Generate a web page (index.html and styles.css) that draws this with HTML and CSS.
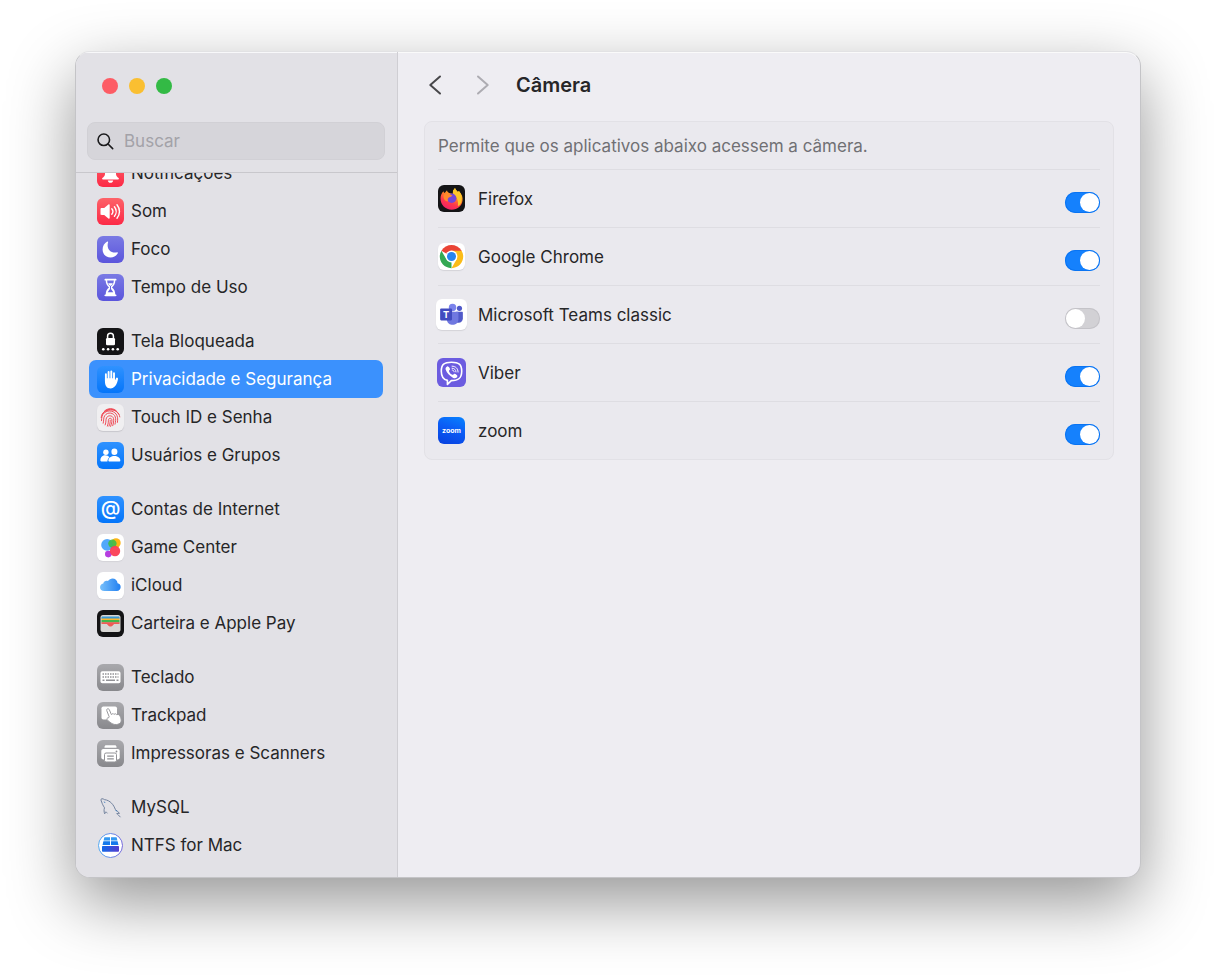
FILE: index.html
```
<!DOCTYPE html>
<html lang="pt-BR">
<head>
<meta charset="utf-8">
<meta name="viewport" content="width=device-width, initial-scale=1">
<title>Câmera</title>
<link rel="stylesheet" href="styles.css">
</head>
<body>
<div class="window">
  <aside class="sidebar">
    <div class="traffic">
      <button class="light close" type="button" aria-label="Fechar"></button>
      <button class="light minimize" type="button" aria-label="Minimizar"></button>
      <button class="light expand" type="button" aria-label="Ampliar"></button>
    </div>
    <label class="search">
      <svg class="search-icon" viewBox="0 0 18 18" aria-hidden="true"><circle cx="7.2" cy="7.2" r="6.1"/><path d="M11.7 11.7 16.6 16.6"/></svg>
      <input type="search" placeholder="Buscar" aria-label="Buscar">
    </label>
    <nav class="nav" aria-label="Ajustes">
      <div class="groups">
      <ul class="group">
        <li><a class="item" href="#notificacoes"><svg class="icon red" viewBox="0 0 27 27" aria-hidden="true"><path fill="#fff" d="M13.5 4.5c-3.600 0-5.500 2.500-5.500 6v3.500c0 2-1.200 2.800-2.600 4-.5.500-.4 1.500.6 1.500h15c1 0 1.100-1 .6-1.500-1.400-1.200-2.600-2-2.600-4v-3.500c0-3.500-1.900-6-5.500-6zM10.800 20.500h5.400c-.3 1.400-1.300 2.300-2.700 2.300s-2.400-.9-2.700-2.300z"/></svg><span>Notificações</span></a></li>
        <li><a class="item" href="#som"><svg class="icon red" viewBox="0 0 27 27" aria-hidden="true"><path fill="#fff" d="M3.500 11.300c0-.8.400-1.200 1.200-1.200h2.500l4.200-3.700c.6-.5 1.300-.2 1.300.6v13c0 .8-.7 1.100-1.300.6l-4.200-3.700H4.700c-.8 0-1.200-.4-1.200-1.200z"/><path class="line" d="M14.800 10.700c1.300 1.600 1.300 4 0 5.600M17.400 8.700c2.300 2.800 2.300 6.800 0 9.600M20 6.700c3.300 4 3.300 9.600 0 13.600"/></svg><span>Som</span></a></li>
        <li><a class="item" href="#foco"><svg class="icon indigo" viewBox="0 0 27 27" aria-hidden="true"><path fill="#fff" d="M10.300 5.600c.5-.3 1 .1.800.7-2 5.900 2.500 11.500 9 10 .6-.1 1 .3.700.9-1.500 2.700-4 4.200-7.200 4.200-4.700 0-8-3.300-8-8 0-3.300 1.700-6.300 4.700-7.800z"/></svg><span>Foco</span></a></li>
        <li><a class="item" href="#tempo"><svg class="icon indigo" viewBox="0 0 27 27" aria-hidden="true"><path fill="#fff" fill-rule="evenodd" d="M8.500 4.800h10c.7 0 1 .4 1 .9s-.3.900-1 .9h-.2c0 3.400-1.300 5.200-3.300 6.900 2 1.700 3.300 3.500 3.300 6.900h.2c.7 0 1 .4 1 .9s-.3.900-1 .9h-10c-.7 0-1-.4-1-.9s.3-.9 1-.9h.2c0-3.400 1.300-5.200 3.300-6.900-2-1.700-3.300-3.500-3.300-6.900h-.2c-.7 0-1-.4-1-.9s.3-.9 1-.9zm1.700 1.800c0 3 1.300 4.400 2.800 5.600v2.800l-2.300 3.300h5.600l-2.300-3.300v-2.800c1.500-1.200 2.800-2.600 2.800-5.600z"/><path fill="#fff" d="M11.200 9.200h4.600c-.5 1.500-1.500 2-2.300 2.900-.8-.9-1.800-1.400-2.300-2.900z"/></svg><span>Tempo de Uso</span></a></li>
      </ul>
      <ul class="group">
        <li><a class="item" href="#tela"><svg class="icon black" viewBox="0 0 27 27" aria-hidden="true"><rect x="9" y="10" width="9" height="7.200" rx="1.200" fill="#fff"/><path d="M10.600 10.500V8c0-3.700 5.800-3.700 5.800 0v2.500" fill="none" stroke="#fff" stroke-width="1.500"/><g fill="#fff"><circle cx="6.300" cy="21.300" r="1.300"/><circle cx="11.100" cy="21.300" r="1.300"/><circle cx="15.900" cy="21.300" r="1.300"/><circle cx="20.700" cy="21.300" r="1.300"/></g></svg><span>Tela Bloqueada</span></a></li>
        <li><a class="item selected" href="#privacidade" aria-current="page"><svg class="icon blue" viewBox="0 0 27 27" aria-hidden="true"><g fill="none" stroke="#fff" stroke-width="1.900" stroke-linecap="round"><path d="M8.900 8.300v7M11.600 6v8M14.300 5.500v8.500M17 7.300v8M20 12.500l-2.200 4.700"/></g><path fill="#fff" d="M7.950 12.300h10v2.500l1-1 1.900-1.700c.2 3-1.700 10.300-7 10.300-4.600 0-5.900-3.600-5.900-7z"/></svg><span>Privacidade e Segurança</span></a></li>
        <li><a class="item" href="#touchid"><svg class="icon light-gray" viewBox="0 0 27 27" aria-hidden="true"><g fill="none" stroke="#ef4350" stroke-width=".95" stroke-linecap="round"><path d="M7.500 7c3.500-3.200 8.700-3.200 12 0M5.200 10.200c3.600-6.700 13-6.700 16.600 0M4.200 13.600c.7-9.800 17.500-10.700 18.600-.7M4.500 16.700c.2-3.200.1-5.700 3-8 4-3.200 10.600-1.800 12.500 3 .8 2 .8 4.200.4 6.700M6.200 19.200c.8-3 0-5.400 1.600-7.600 2.800-4 9.100-3.100 10.500 1.400.7 2.200.3 4.700-.3 7.200M8.200 20.900c1.200-3.200.3-5.200 1.400-7.200 1.600-2.900 6-2.300 6.900.7.600 2.400-.1 4.800-.8 7.300M10.400 22.100c1.400-3.400.6-4.900 1.200-6.700.6-1.700 2.800-1.400 3.200.1.500 2.300-.5 4.500-1.200 6.900M13.200 16.200c.3 2-.4 3.800-1.200 5.900"/></g></svg><span>Touch ID e Senha</span></a></li>
        <li><a class="item" href="#usuarios"><svg class="icon blue" viewBox="0 0 27 27" aria-hidden="true"><g fill="#fff"><circle cx="8.900" cy="10.300" r="2.700"/><path d="M3.400 18.300c0-5.800 6.800-6.200 9.100-3-1.300 1-2 2.500-2.100 4.200H4.300c-.6 0-.9-.5-.9-1.200z"/><ellipse cx="17.400" cy="9.800" rx="3" ry="3.300"/><path d="M11.400 18.400c0-6 11.900-6 11.900 0 0 .7-.4 1.100-1 1.100h-9.900c-.6 0-1-.4-1-1.100z"/></g></svg><span>Usuários e Grupos</span></a></li>
      </ul>
      <ul class="group">
        <li><a class="item" href="#contas"><svg class="icon blue" viewBox="0 0 27 27" aria-hidden="true"><text class="at" x="13.500" y="19" text-anchor="middle">@</text></svg><span>Contas de Internet</span></a></li>
        <li><a class="item" href="#game"><svg class="icon white" viewBox="0 0 27 27" aria-hidden="true"><circle cx="19" cy="8.900" r="4.700" fill="#fdb515"/><circle cx="10.100" cy="10.900" r="5.900" fill="#52a8fb"/><circle cx="11.300" cy="20.100" r="3.300" fill="#b63fe0"/><circle cx="15.400" cy="9.600" r="4.200" fill="#3dbd48" opacity=".9"/><circle cx="18" cy="17" r="5.200" fill="#fb3d54" opacity=".95"/></svg><span>Game Center</span></a></li>
        <li><a class="item" href="#icloud"><svg class="icon white" viewBox="0 0 27 27" aria-hidden="true"><defs><linearGradient id="cloud" x1="0" x2="1"><stop stop-color="#78c0fb"/><stop offset="1" stop-color="#217ff1"/></linearGradient></defs><path fill="url(#cloud)" d="M7.300 19c-5.300 0-5.600-6.700-1-7.600.5-2.500 3-3.400 4.700-2.300 2.600-4.500 9.200-3.100 9.600 2.200 4.100.4 4.400 7.700-.9 7.700z"/></svg><span>iCloud</span></a></li>
        <li><a class="item" href="#carteira"><svg class="icon black" viewBox="0 0 27 27" aria-hidden="true"><rect x="3.500" y="5" width="20" height="17" rx="2.500" fill="#d8d7d5"/><path fill="#3a98d2" d="M4.500 7.500c0-.7.500-1 1-1h16c.5 0 1 .3 1 1V9h-18z"/><path fill="#fbb62c" d="M4.500 8.500h18V10h-18z"/><path fill="#42b64b" d="M4.500 10h18v2.500h-18z"/><path fill="#f05b55" d="M4.500 12.200h18V14h-4.900c-1.400 0-1.600 2.500-4.100 2.500S10.800 14 9.400 14H4.500z"/></svg><span>Carteira e Apple Pay</span></a></li>
      </ul>
      <ul class="group">
        <li><a class="item" href="#teclado"><svg class="icon gray" viewBox="0 0 27 27" aria-hidden="true"><rect x="3.500" y="7.300" width="20" height="12" rx="1.800" fill="#fff"/><path d="M5.500 10h16M5.500 13h16" stroke="#929296" stroke-width="1.500" stroke-dasharray="1.500 1"/><path d="M5.500 16.300h2M9 16.300h9M19.500 16.300h2" stroke="#929296" stroke-width="1.400"/></svg><span>Teclado</span></a></li>
        <li><a class="item" href="#trackpad"><svg class="icon gray" viewBox="0 0 27 27" aria-hidden="true"><rect x="4.500" y="4.500" width="15.500" height="13" rx="1.800" fill="#fff"/><path fill="#fff" stroke="#99999d" stroke-width="1" d="M12.200 14.800 9.800 8.700c-.7-1.900 1.700-2.800 2.500-1l2.100 4.900c.8-1.200 2.200-1.100 2.700-.2.900-1 2.200-.7 2.600.3 2.200-.9 3.100.5 3.900 2.600 1.700 4.700-.5 6.800-4 7.200-3.500.4-5.600-1.300-9.100-4.300-1.300-1.200-.4-2.500 1-2.300z"/></svg><span>Trackpad</span></a></li>
        <li><a class="item" href="#impressoras"><svg class="icon gray" viewBox="0 0 27 27" aria-hidden="true"><g fill="#fff"><path d="M7.500 7.800V7c0-1.100.7-1.700 1.700-1.700h8.600c1 0 1.700.6 1.700 1.700v.8z"/><path d="M4.300 11c0-1.300.8-2.100 2.100-2.100h14.200c1.300 0 2.100.8 2.100 2.100v6.300c0 1.300-.8 2.100-2.100 2.100H6.400c-1.300 0-2.100-.8-2.100-2.100z"/></g><circle cx="19.500" cy="11.500" r=".9" fill="#909094"/><rect x="7.500" y="13" width="12" height="9" rx="1.600" fill="#fff" stroke="#939397"/><path d="M10.200 16.100h6.600M10.200 18.900h6.600" stroke="#909094" stroke-width="1.200"/></svg><span>Impressoras e Scanners</span></a></li>
      </ul>
      <ul class="group">
        <li><a class="item" href="#mysql"><svg class="icon" viewBox="0 0 27 27" aria-hidden="true"><g fill="none" stroke="#71819d" stroke-width="1" stroke-linejoin="round"><path d="M8.700 17.900c-.4.600-.8 1.300-1 1.900-.7-1.800-.9-3.900-.2-6C6 11.500 5.200 9.700 4.700 8 3.900 6.700 3.600 5 4.800 4.700c1-.1 1.800.4 2.600.9 6 .7 9.400 5.500 11 10 1 .9 3 2.300 4.100 3.700-1.100 0-2 .1-2.800.3 1 .8 2.400 1.900 3.700 3.600M10.400 19.300c-.7-.8-1.200-1.500-1.700-1.400"/><path stroke="#417dbd" d="m7.200 7.600.8 1.300M18.700 16.100l1.400 1.500"/></g></svg><span>MySQL</span></a></li>
        <li><a class="item" href="#ntfs"><svg class="icon" viewBox="0 0 27 27" aria-hidden="true"><defs><linearGradient id="ring" x1="0" x2="1"><stop stop-color="#54a8f0"/><stop offset="1" stop-color="#7569db"/></linearGradient><linearGradient id="drive" x1="0" x2="1"><stop stop-color="#1168e8"/><stop offset="1" stop-color="#563dce"/></linearGradient></defs><circle cx="13.500" cy="13.500" r="12" fill="#fff" stroke="url(#ring)" stroke-width="1"/><path fill="#3498f1" d="M7.400 5.200H13V8.400H6.600zM14 5.200h5.600l.8 3.200H14z"/><path fill="#1579ec" d="M6.400 9.300H13v3.600H5.500zM14 9.300h6.600l.9 3.600H14z"/><rect x="5" y="14" width="17" height="5.800" rx=".8" fill="url(#drive)"/></svg><span>NTFS for Mac</span></a></li>
      </ul>
      </div>
    </nav>
  </aside>
  <main class="content">
    <header class="toolbar">
      <button class="arrow" type="button" aria-label="Voltar"><svg viewBox="0 0 14 20" aria-hidden="true"><path d="M12 1.500 2.300 10l9.700 8.500"/></svg></button>
      <button class="arrow forward" type="button" aria-label="Avançar" disabled><svg viewBox="0 0 14 20" aria-hidden="true"><path d="M2 1.500 11.700 10 2 18.500"/></svg></button>
      <h1 class="title">Câmera</h1>
    </header>
    <section class="panel">
      <p class="note">Permite que os aplicativos abaixo acessem a câmera.</p>
      <label class="app"><svg class="app-icon black" viewBox="0 0 27 27" aria-hidden="true"><defs><linearGradient id="fox" x1=".8" x2=".3" y2="1"><stop stop-color="#ffdd36"/><stop offset=".4" stop-color="#ff8b25"/><stop offset=".7" stop-color="#ff374d"/><stop offset="1" stop-color="#ee2068"/></linearGradient></defs><path fill="url(#fox)" d="M5.400 6.200c.3 1 .7 1.500 1.300 1.900L9 5.200c.2 1.500 1 2.300 2.300 2.700l3.400 1 .3-3.100 2-2.900c.5 2 2 2.800 3 4l.9-.9C24 9.300 25 12.300 24.500 15.700c-.8 5.500-5.200 9-10.700 9-6.500 0-11.300-4.900-11.300-11.200 0-2.900 1.100-5.500 2.900-7.300z"/><path fill="#ffc629" d="m15 5.800 2-2.900c.5 2 2 2.800 3 4l.9-.9c2.800 3 3.800 8.500 1.800 12.400-.7 1.400-1.700 2-2.800 2.600 1-4.800-1.300-10-4.900-12.100z"/><circle cx="13.700" cy="13.200" r="4.700" fill="#7446d8"/><path fill="#ff8a2b" d="M5.500 10.500c1.500-2.300 4.500-2.500 6.400-1.200l2.400 1.100c-1.200 1.900-2.800 1.400-3.800 2.400-1.200 1.200-.8 2.500-.3 3.600-3.300 0-4.900-2.600-4.700-5.900z"/></svg><span class="name">Firefox</span><input class="switch" type="checkbox" role="switch" checked></label>
      <label class="app"><svg class="app-icon white" viewBox="0 0 27 27" aria-hidden="true"><path fill="#ea4335" d="M13.500 13.500 3.400 7.700C8 0 19 0 23.600 7.700z"/><path fill="#34a853" d="M13.500 13.500v11.700C4 25.200-1 15.200 3.400 7.700l5 8.600z"/><path fill="#fbbc18" d="M13.500 25.200c9.500 0 14.500-10 10.100-17.500H13.500l5 8.700z"/><circle cx="13.500" cy="13.500" r="5.900" fill="#fff"/><circle cx="13.500" cy="13.500" r="4.500" fill="#2684ee"/></svg><span class="name">Google Chrome</span><input class="switch" type="checkbox" role="switch" checked></label>
      <label class="app"><svg class="app-icon large white" viewBox="0 0 30 30" aria-hidden="true"><circle cx="16" cy="8.200" r="3.600" fill="#7b83eb"/><circle cx="22.700" cy="9" r="2.500" fill="#5059c9"/><path fill="#5059c9" d="M19.500 12.300H25c.7 0 1 .4 1 1v5.300c0 3.500-3 5.200-6.500 3.800z"/><path fill="#7078e0" d="M10.500 12.300h10c.7 0 1.200.4 1.200 1.100v5.900c0 7.400-10.500 7.400-11.200 1z"/><rect x="4" y="9.200" width="11.500" height="11.500" rx="1" fill="#414bc0"/><text class="teams-letter" x="9.750" y="18.300" text-anchor="middle">T</text></svg><span class="name">Microsoft Teams classic</span><input class="switch" type="checkbox" role="switch"></label>
      <label class="app"><svg class="app-icon medium violet" viewBox="0 0 27 27" aria-hidden="true"><g fill="none" stroke="#fff" stroke-width="1.500" stroke-linecap="round" stroke-linejoin="round"><path d="M9.700 20.800c-4-.8-5.700-3.300-5.700-8.500C4 6 6.700 3.900 13.500 3.900S23 6 23 12.300c0 6.600-3 8.800-9.700 8.800l-3.600 3.500z"/><path stroke-width=".9" d="M14 7.600c3.500.1 5.500 2.100 5.600 5.500M14 9.500c2.200.1 3.600 1.300 3.700 3.500M14.200 11.200c1 .1 1.600.6 1.700 1.600"/></g><path fill="#fff" d="M9.700 7.700c.8-.5 2.700 2.100 2.400 2.900-.2.700-1.200.9-1 1.600.5 1.800 1.700 3 3.400 3.500.8.200 1-.9 1.700-1 .8-.2 3.100 1.500 2.800 2.300-.8 2-2.400 2.300-4.200 1.300-3.200-1.700-5.400-4.100-6.700-7.300-.5-1.300.2-2.600 1.600-3.300z"/></svg><span class="name">Viber</span><input class="switch" type="checkbox" role="switch" checked></label>
      <label class="app"><svg class="app-icon zoom" viewBox="0 0 27 27" aria-hidden="true"><text class="zoom-word" x="13.500" y="15.500" text-anchor="middle">zoom</text></svg><span class="name">zoom</span><input class="switch" type="checkbox" role="switch" checked></label>
    </section>
  </main>
</div>
</body>
</html>
```
FILE: styles.css
```
* {
  box-sizing: border-box;
}

body {
  margin: 0;
  min-height: 100vh;
  display: flex;
  padding: 51px 75px 98px;
  background: #fff;
  color: #262628;
  font-family: Inter, "Liberation Sans", sans-serif;
  font-size: 17px;
  line-height: 24px;
}

button {
  padding: 0;
  border: 0;
  background: none;
}

.window {
  flex: 1;
  display: flex;
  min-width: 0;
  border: 1px solid #c4c4c7;
  border-top-color: #e2e2e4;
  border-radius: 15px;
  overflow: hidden;
  background: #eeedf2;
  box-shadow: 0 24px 66px rgba(0, 0, 0, 0.42), inset 0 1px 0 #fafafa;
}

.sidebar {
  flex: 0 0 322px;
  display: flex;
  flex-direction: column;
  min-width: 0;
  background: #e2e1e6;
  border-right: 1px solid #cfced3;
  box-shadow: inset 0 1px 0 #f8f8fa;
}

.traffic {
  display: flex;
  gap: 11px;
  padding: 26px 26px 28px;
}

.light {
  width: 16px;
  height: 16px;
  border-radius: 50%;
}

.close {
  background: #fd5c65;
}

.minimize {
  background: #fabf31;
}

.expand {
  background: #33ba45;
}

.search {
  display: flex;
  align-items: center;
  gap: 10px;
  height: 38px;
  margin: 0 12px 12px 11px;
  padding: 0 9px;
  border: 1px solid #d1d0d5;
  border-radius: 8px;
  background: #d6d5da;
}

.search-icon {
  flex: none;
  width: 17px;
  height: 17px;
  fill: none;
  stroke: #1b1b1d;
  stroke-width: 1.7;
  stroke-linecap: round;
}

.search input {
  flex: 1;
  width: 100%;
  min-width: 0;
  padding: 0;
  border: 0;
  outline: 0;
  background: none;
  font: inherit;
}

.search input::placeholder {
  color: #a3a2a8;
  opacity: 1;
}

.nav {
  flex: 1;
  overflow: hidden;
  padding: 0 14px 0 13px;
  border-top: 1px solid #c8c7cc;
}

.groups {
  display: flex;
  flex-direction: column;
  gap: 16px;
  margin-top: -19px;
}

.group {
  margin: 0;
  padding: 0;
  list-style: none;
}

.item {
  display: flex;
  align-items: center;
  gap: 7px;
  height: 38px;
  padding: 0 8px;
  border-radius: 7px;
  color: inherit;
  text-decoration: none;
  white-space: nowrap;
}

.selected {
  background: #3b91fd;
  color: #fff;
}

.icon {
  flex: none;
  width: 27px;
  height: 27px;
  border-radius: 6px;
}

.red {
  background: linear-gradient(#fd6369, #fc2946);
}

.indigo {
  background: linear-gradient(#7a7ae4, #5b55dc);
}

.blue {
  background: linear-gradient(#2f92ff, #0475fa);
}

.black {
  background: #141416;
}

.gray {
  background: linear-gradient(#a9a9ad, #88888c);
}

.light-gray {
  background: #f0eff1;
  box-shadow: 0 1px 1px #c8c7cc;
}

.white {
  background: #fff;
  box-shadow: 0 1px 1px #d4d3d8;
}

.violet {
  background: #6c5ce0;
}

.zoom {
  background: linear-gradient(20deg, #0840de, #0b5cf5 55%, #0783ff);
}

.line {
  fill: none;
  stroke: #fff;
  stroke-width: 1.4;
  stroke-linecap: round;
}

.at {
  fill: #fff;
  font-size: 20px;
  font-weight: 500;
}

.teams-letter {
  fill: #fff;
  font-size: 9px;
  font-weight: 700;
}

.zoom-word {
  fill: #fff;
  font-size: 7px;
  font-weight: 700;
}

.content {
  flex: 1;
  min-width: 0;
  padding: 19px 26px;
}

.toolbar {
  display: flex;
  align-items: center;
  height: 28px;
  margin-bottom: 22px;
  padding-left: 4px;
}

.arrow {
  display: flex;
  width: 14px;
  height: 20px;
  margin-right: 34px;
}

.arrow svg {
  width: 14px;
  height: 20px;
  fill: none;
  stroke: #48484b;
  stroke-width: 2;
  stroke-linecap: round;
  stroke-linejoin: round;
}

.forward {
  margin-right: 26px;
}

.forward svg {
  stroke: #adacb2;
}

.title {
  margin: 0;
  font-size: 20px;
  font-weight: 600;
}

.panel {
  padding: 0 13px;
  border: 1px solid #e2e1e6;
  border-radius: 8px;
  background: #eae9ee;
}

.note {
  margin: 0;
  padding: 12px 0 11px;
  color: #707074;
}

.app {
  display: flex;
  align-items: center;
  gap: 13px;
  height: 58px;
  border-top: 1px solid #dedde2;
}

.app-icon {
  flex: none;
  width: 27px;
  height: 27px;
  border-radius: 6px;
}

.medium {
  width: 29px;
  height: 29px;
  margin: 0 -1px;
}

.large {
  width: 31px;
  height: 31px;
  margin: 0 -2px;
}

.name {
  flex: 1;
}

.switch {
  appearance: none;
  flex: none;
  display: flex;
  align-items: center;
  width: 35px;
  height: 21px;
  margin: 7px 0 0;
  padding: 1px;
  border-radius: 11px;
  background: #d2d1d5;
  box-shadow: inset 0 0 0 1px #c4c3c8;
}

.switch::before {
  content: "";
  width: 19px;
  height: 19px;
  border-radius: 50%;
  background: #fff;
}

.switch:checked {
  justify-content: flex-end;
  background: #1581fd;
  box-shadow: inset 0 0 0 1px #0a74f2;
}
```
